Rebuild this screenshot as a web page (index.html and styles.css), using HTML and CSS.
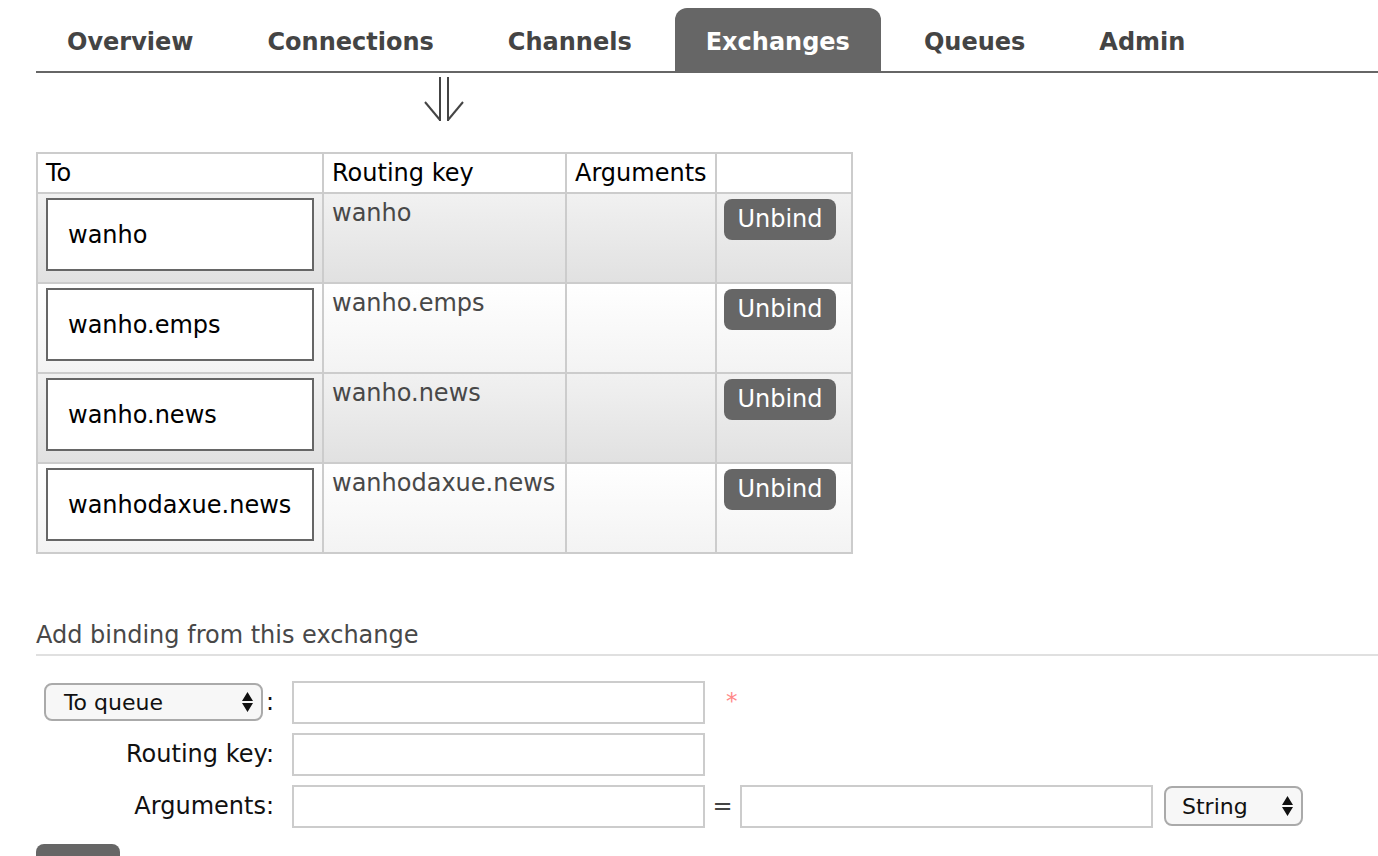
FILE: index.html
```html
<!DOCTYPE html>
<html lang="en">
<head>
<meta charset="utf-8">
<title>Exchanges</title>
<link rel="stylesheet" href="styles.css">
</head>
<body>
<nav class="tabs">
  <span class="tab">Overview</span>
  <span class="tab">Connections</span>
  <span class="tab">Channels</span>
  <span class="tab active">Exchanges</span>
  <span class="tab">Queues</span>
  <span class="tab">Admin</span>
</nav>

<div class="arrow-row">
  <svg class="arrow" width="48" height="50" viewBox="0 0 48 50" aria-label="bindings">
    <g stroke="#444" stroke-width="2" fill="none" stroke-linecap="butt">
      <line x1="20" y1="2" x2="20" y2="46"/>
      <line x1="28" y1="2" x2="28" y2="46"/>
      <polyline points="5,27 20,45"/>
      <polyline points="43,27 28,45"/>
    </g>
  </svg>
</div>

<table class="bindings">
  <thead>
    <tr>
      <th class="c1">To</th>
      <th class="c2">Routing key</th>
      <th class="c3">Arguments</th>
      <th class="c4"></th>
    </tr>
  </thead>
  <tbody>
    <tr class="alt1">
      <td><div class="dest">wanho</div></td>
      <td><span class="rk">wanho</span></td>
      <td></td>
      <td><button class="btn">Unbind</button></td>
    </tr>
    <tr class="alt0">
      <td><div class="dest">wanho.emps</div></td>
      <td><span class="rk">wanho.emps</span></td>
      <td></td>
      <td><button class="btn">Unbind</button></td>
    </tr>
    <tr class="alt1">
      <td><div class="dest">wanho.news</div></td>
      <td><span class="rk">wanho.news</span></td>
      <td></td>
      <td><button class="btn">Unbind</button></td>
    </tr>
    <tr class="alt0">
      <td><div class="dest">wanhodaxue.news</div></td>
      <td><span class="rk">wanhodaxue.news</span></td>
      <td></td>
      <td><button class="btn">Unbind</button></td>
    </tr>
  </tbody>
</table>

<h3 class="section">Add binding from this exchange</h3>

<form class="form">
  <div class="row">
    <div class="label">
      <div class="select sel-queue">
        <span>To queue</span>
        <svg width="11" height="20" viewBox="0 0 11 20"><path d="M0 9 L5.5 0 L11 9 Z M0 11 L5.5 20 L11 11 Z" fill="#111"/></svg>
      </div>
      <span class="colon">:</span>
    </div>
    <span class="input"></span>
    <span class="req">*</span>
  </div>
  <div class="row">
    <div class="label">Routing key:</div>
    <span class="input"></span>
  </div>
  <div class="row">
    <div class="label">Arguments:</div>
    <span class="input"></span>
    <span class="eq">=</span>
    <span class="input"></span>
    <div class="select sel-type">
      <span>String</span>
      <svg width="11" height="20" viewBox="0 0 11 20"><path d="M0 9 L5.5 0 L11 9 Z M0 11 L5.5 20 L11 11 Z" fill="#111"/></svg>
    </div>
  </div>
  <button type="button" class="btn bind" aria-label="Bind"></button>
</form>
</body>
</html>
```

FILE: styles.css
```css
html, body {
  margin: 0;
  height: 856px;
  overflow: hidden;
}
body {
  font-family: "DejaVu Sans", Verdana, sans-serif;
  font-size: 24px;
  color: #000;
  background: #fff;
}

.tabs {
  display: flex;
  gap: 12px;
  margin-left: 36px;
  padding-top: 8px;
  border-bottom: 2px solid #666;
}
.tab {
  padding: 0 31px;
  height: 63px;
  line-height: 69px;
  font-weight: bold;
  font-size: 24px;
  color: #444;
}
.tab.active {
  background: #666;
  color: #fff;
  border-radius: 12px 12px 0 0;
}

.arrow-row {
  box-sizing: border-box;
  height: 79px;
  padding: 2px 0 0 420px;
}
.arrow {
  display: block;
}

.bindings {
  margin-left: 36px;
  border-collapse: separate;
  border-spacing: 0;
  border-top: 2px solid #ccc;
  border-left: 2px solid #ccc;
  table-layout: fixed;
  width: 817px;
}
.bindings th,
.bindings td {
  box-sizing: border-box;
  border-right: 2px solid #ccc;
  border-bottom: 2px solid #ccc;
  padding: 4px 8px;
  vertical-align: top;
  text-align: left;
  line-height: 28px;
}
.bindings th {
  font-weight: normal;
  background: #fff;
  padding-top: 5px;
  padding-bottom: 5px;
}
.c1 { width: 286px; }
.c2 { width: 243px; }
.c3 { width: 150px; }
.c4 { width: 136px; }

.alt1 td { background: linear-gradient(#f1f1f1, #e1e1e1); }
.alt0 td { background: linear-gradient(#ffffff, #f3f3f3); }

.dest {
  box-sizing: border-box;
  height: 73px;
  margin-bottom: 7px;
  border: 2px solid #666;
  background: #fff;
  padding-left: 20px;
  display: flex;
  align-items: center;
  color: #000;
}
.rk {
  display: block;
  padding-top: 1px;
  color: #484848;
}

.btn {
  display: block;
  margin: 1px 0 0 -1px;
  width: 112px;
  height: 41px;
  border: 0;
  border-radius: 8px;
  background: #666;
  color: #fff;
  font-family: "DejaVu Sans", Verdana, sans-serif;
  font-size: 24px;
  padding: 0;
  line-height: 41px;
}

.section {
  margin: 67px 0 0 36px;
  padding-bottom: 5px;
  border-bottom: 2px solid #e0e0e0;
  font-weight: normal;
  font-size: 24px;
  line-height: 28px;
  color: #484848;
}

.form {
  margin: 25px 0 0 36px;
}
.row {
  display: flex;
  align-items: center;
  height: 42px;
  margin-bottom: 10px;
}
.label {
  width: 238px;
  display: flex;
  justify-content: flex-end;
  align-items: center;
  margin-right: 18px;
  color: #111;
}
.colon {
  margin-left: 3px;
}
.input {
  box-sizing: border-box;
  width: 413px;
  height: 43px;
  border: 2px solid #ccc;
  background: #fff;
}
.req {
  margin-left: 21px;
  color: #f88;
  font-size: 23px;
  line-height: 22px;
  padding-bottom: 2px;
}
.eq {
  width: 35px;
  text-align: center;
  color: #444;
}
.select {
  box-sizing: border-box;
  height: 38px;
  display: flex;
  align-items: center;
  justify-content: space-between;
  border: 2px solid #aaa;
  border-radius: 8px;
  background: #f7f7f7;
  font-size: 22px;
  color: #111;
}
.sel-queue {
  width: 219px;
  padding: 0 8px 0 18px;
}
.sel-type {
  width: 139px;
  height: 40px;
  margin-left: 11px;
  padding: 0 8px 0 16px;
}
.bind {
  margin: 17px 0 0 0;
  width: 84px;
  height: 40px;
}
```
